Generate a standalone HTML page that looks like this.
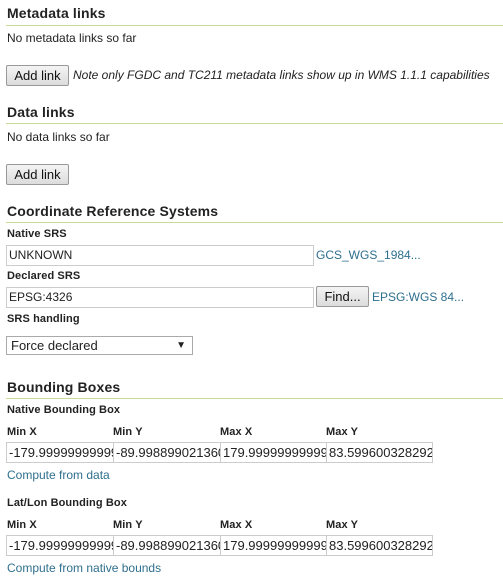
<!DOCTYPE html>
<html><head><style>
body{margin:0;width:503px;height:583px;background:#fff;font-family:"Liberation Sans",Arial,sans-serif;color:#222;position:relative;overflow:hidden}
.a{position:absolute;white-space:nowrap}
h{position:absolute;left:7px;font-weight:bold;font-size:14px;color:#222;letter-spacing:0.15px}
.ln{position:absolute;left:6px;right:0;height:1px;background:#c3dc96}
.t{font-size:12px;color:#222}
.lb{font-size:11px;font-weight:bold;color:#222;letter-spacing:0.1px}
.btn{position:absolute;box-sizing:border-box;border:1px solid #999;border-radius:2px;background:linear-gradient(#f4f4f4,#dcdcdc);font-size:13px;text-align:center;color:#111}
.in{position:absolute;box-sizing:border-box;border:1px solid #ccc;background:#fff;font-size:12px;padding-left:2px;color:#222;overflow:hidden;white-space:nowrap}
.bb{font-size:13px}
.lk{font-size:12px;color:#2f6f8e}
</style></head><body>
<h style="top:5px">Metadata links</h>
<div class="ln" style="top:25px"></div>
<div class="a t" style="left:7px;top:31px">No metadata links so far</div>
<div class="btn" style="left:6px;top:65px;width:63px;height:21px;line-height:19px">Add link</div>
<div class="a t" style="left:73px;top:68px;font-style:italic">Note only FGDC and TC211 metadata links show up in WMS 1.1.1 capabilities</div>

<h style="top:104px">Data links</h>
<div class="ln" style="top:123px"></div>
<div class="a t" style="left:7px;top:130px">No data links so far</div>
<div class="btn" style="left:6px;top:164px;width:63px;height:21px;line-height:19px">Add link</div>

<h style="top:203px">Coordinate Reference Systems</h>
<div class="ln" style="top:222px"></div>
<div class="a lb" style="left:7px;top:228px">Native SRS</div>
<div class="in" style="left:6px;top:245px;width:308px;height:21px;line-height:19px">UNKNOWN</div>
<div class="a lk" style="left:316px;top:248px">GCS_WGS_1984...</div>
<div class="a lb" style="left:7px;top:270px">Declared SRS</div>
<div class="in" style="left:6px;top:287px;width:308px;height:21px;line-height:19px">EPSG:4326</div>
<div class="btn" style="left:316px;top:286px;width:53px;height:21px;line-height:19px">Find...</div>
<div class="a lk" style="left:372px;top:290px">EPSG:WGS 84...</div>
<div class="a lb" style="left:7px;top:313px">SRS handling</div>
<div class="in" style="left:6px;top:336px;width:187px;height:19px;line-height:17px;border-color:#aaa;font-size:13px;padding-left:4px">Force declared<span style="position:absolute;right:6px;font-size:10px">▼</span></div>

<h style="top:379px">Bounding Boxes</h>
<div class="ln" style="top:398px"></div>
<div class="a lb" style="left:7px;top:404px">Native Bounding Box</div>
<div class="a lb" style="left:7px;top:426px">Min X</div>
<div class="a lb" style="left:113px;top:426px">Min Y</div>
<div class="a lb" style="left:220px;top:426px">Max X</div>
<div class="a lb" style="left:326px;top:426px">Max Y</div>
<div class="in bb" style="left:6px;top:442px;width:108px;height:21px;line-height:19px">-179.99999999999</div>
<div class="in bb" style="left:113px;top:442px;width:108px;height:21px;line-height:19px">-89.998899021360</div>
<div class="in bb" style="left:220px;top:442px;width:107px;height:21px;line-height:19px">179.99999999999</div>
<div class="in bb" style="left:326px;top:442px;width:107px;height:21px;line-height:19px">83.599600328292</div>
<div class="a lk" style="left:7px;top:468px">Compute from data</div>

<div class="a lb" style="left:7px;top:497px">Lat/Lon Bounding Box</div>
<div class="a lb" style="left:7px;top:519px">Min X</div>
<div class="a lb" style="left:113px;top:519px">Min Y</div>
<div class="a lb" style="left:220px;top:519px">Max X</div>
<div class="a lb" style="left:326px;top:519px">Max Y</div>
<div class="in bb" style="left:6px;top:535px;width:108px;height:21px;line-height:19px">-179.99999999999</div>
<div class="in bb" style="left:113px;top:535px;width:108px;height:21px;line-height:19px">-89.998899021360</div>
<div class="in bb" style="left:220px;top:535px;width:107px;height:21px;line-height:19px">179.99999999999</div>
<div class="in bb" style="left:326px;top:535px;width:107px;height:21px;line-height:19px">83.599600328292</div>
<div class="a lk" style="left:7px;top:561px">Compute from native bounds</div>
</body></html>
